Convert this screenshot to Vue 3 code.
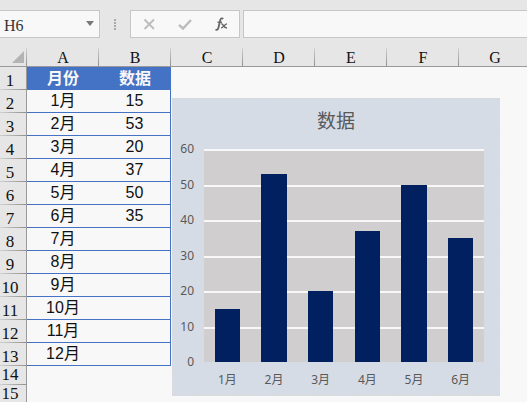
<script setup>
import { ref } from 'vue'

const cellName = ref('H6')
const formula = ref('')
const columns = ['A', 'B', 'C', 'D', 'E', 'F', 'G']
const values = [15, 53, 20, 37, 50, 35]
const months = Array.from({ length: 12 }, (_, i) => ({
  label: `${i + 1}月`,
  value: values[i] ?? ''
}))
const charted = months.slice(0, values.length)
const axisMax = 60
const ticks = [60, 50, 40, 30, 20, 10, 0]
</script>

<template>
  <div class="workbook">
    <header class="formula-bar">
      <div class="box name-box">
        <input v-model="cellName" class="name-input" aria-label="名称框" />
        <button class="name-drop" type="button" aria-label="展开">
          <svg width="8" height="5" viewBox="0 0 8 5"><path d="M0 0h8L4 5z" fill="#777" /></svg>
        </button>
      </div>
      <div class="grip"><i></i><i></i><i></i><i></i></div>
      <div class="box actions">
        <button type="button" aria-label="取消">
          <svg width="14" height="14" viewBox="0 0 14 14"><path d="M2.5 2.5l9.5 9.5M12 2.5L2.5 12" stroke="#bcbcbc" stroke-width="1.8" fill="none" /></svg>
        </button>
        <button type="button" aria-label="输入">
          <svg width="14" height="14" viewBox="0 0 14 14"><path d="M1 7.8l4 3.7L13 3" stroke="#bcbcbc" stroke-width="2.4" fill="none" /></svg>
        </button>
        <button type="button" aria-label="插入函数">
          <svg width="14" height="14" viewBox="0 0 14 14" fill="none" stroke="#666">
            <path d="M9 2.2C8.400 .8 6.800 1 6.300 3L4.300 11.200C3.900 12.700 2.600 13.300 1.600 12.300" stroke-width="1.8" />
            <path d="M3.500 5.200h4.500" stroke-width="1.400" />
            <path d="M7.300 7c2.200-.8 2.300 4.600 5.700 3.700" stroke-width="1.600" />
            <path d="M13 6.800c-2.200 0-3.600 4-6 4" stroke-width="1.200" />
          </svg>
        </button>
      </div>
      <input v-model="formula" class="box formula" aria-label="编辑栏" />
    </header>

    <main class="sheet">
      <table class="grid">
        <colgroup>
          <col class="col-index" />
          <col v-for="c in columns" :key="c" class="col" />
        </colgroup>
        <thead>
          <tr>
            <th class="corner">
              <svg width="12" height="12" viewBox="0 0 12 12"><path d="M12 0v12H0z" fill="#b4b4b4" /></svg>
            </th>
            <th v-for="c in columns" :key="c" class="col-head" scope="col">{{ c }}</th>
          </tr>
        </thead>
        <tbody>
          <tr class="title-row">
            <th class="index" scope="row">1</th>
            <td>月份</td>
            <td>数据</td>
            <td colspan="5" class="blank"></td>
          </tr>
          <tr v-for="(m, i) in months" :key="m.label" class="data-row">
            <th class="index" scope="row">{{ i + 2 }}</th>
            <td>{{ m.label }}</td>
            <td class="last">{{ m.value }}</td>
            <td colspan="5" class="blank"></td>
          </tr>
          <tr v-for="n in [14, 15]" :key="n" class="short-row">
            <th class="index" scope="row">{{ n }}</th>
            <td colspan="7" class="blank"></td>
          </tr>
        </tbody>
      </table>

      <figure class="chart">
        <figcaption>数据</figcaption>
        <div class="y-axis">
          <span v-for="t in ticks" :key="t">{{ t }}</span>
        </div>
        <div class="plot">
          <div class="lines"><i v-for="n in 6" :key="n"></i></div>
          <div class="bars">
            <div v-for="m in charted" :key="m.label" class="slot">
              <div class="bar" :style="{ height: (m.value / axisMax) * 100 + '%' }"></div>
            </div>
          </div>
        </div>
        <div class="x-axis">
          <span v-for="m in charted" :key="m.label">{{ m.label }}</span>
        </div>
      </figure>
    </main>
  </div>
</template>

<style>
body {
  background: #f8f8f8;
}
</style>

<style scoped>
.workbook {
  height: 100vh;
  display: flex;
  flex-direction: column;
  overflow: hidden;
  background: #f8f8f8;
  color: #111;
  font-family: "Liberation Sans", "Noto Sans CJK SC", sans-serif;
}
.workbook * {
  box-sizing: border-box;
}
.formula-bar {
  flex: none;
  display: flex;
  padding: 10px 0;
  background: #e6e6e6;
}
.box {
  height: 28px;
  border: 1px solid #c6c6c6;
  background: #f8f8f8;
}
button {
  display: flex;
  align-items: center;
  justify-content: center;
  padding: 0;
  border: 0;
  background: none;
}
.name-box {
  display: flex;
  width: 100px;
  border-left: 0;
}
.name-input {
  flex: 1;
  min-width: 0;
  padding: 4px 0 0 4px;
  border: 0;
  outline: 0;
  background: none;
  color: #333;
  font: 16px "Liberation Serif", serif;
}
.name-drop {
  width: 18px;
  padding: 0 0 2px 0;
}
.grip {
  width: 30px;
  display: flex;
  flex-direction: column;
  align-items: center;
  justify-content: center;
  gap: 1px;
}
.grip i {
  width: 2px;
  height: 2px;
  background: #aaa;
}
.actions {
  width: 110px;
  display: grid;
  grid-template-columns: repeat(3, 1fr);
}
.formula {
  flex: 1;
  min-width: 0;
  margin-left: 3px;
  border-right: 0;
  border-radius: 0;
  outline: 0;
}
.sheet {
  position: relative;
  flex: 1;
  overflow: hidden;
}
.grid {
  table-layout: fixed;
  width: 531px;
  border-collapse: separate;
  border-spacing: 0;
}
.col-index {
  width: 27px;
}
.col {
  width: 72px;
}
th,
td {
  padding: 0;
  text-align: center;
}
thead th {
  height: 19px;
  border-bottom: 1px solid #999;
  background: linear-gradient(#d0d0d0, #909090) right / 1px 100% no-repeat #e6e6e6;
}
.col-head {
  font: 16px/16px "Liberation Serif", serif;
  padding-top: 2px;
}
.corner svg {
  display: block;
  margin: 0 0 0 12px;
}
.index {
  height: 23px;
  padding: 0 6px 1px 0;
  border-right: 1px solid #999;
  background: linear-gradient(90deg, #d0d0d0, #909090) bottom / 100% 1px no-repeat #e6e6e6;
  font: 17px/16px "Liberation Serif", serif;
  vertical-align: bottom;
}
.title-row td {
  font-size: 16px;
  line-height: 22px;
  font-weight: 700;
}
.title-row td:not(.blank) {
  background: #4472c4;
  color: #f8f8f8;
}
.data-row td:not(.blank) {
  border-bottom: 1px solid #4472c4;
  font-size: 16px;
  line-height: 22px;
}
.data-row .last {
  border-right: 1px solid #4472c4;
}
.short-row .index {
  height: 19px;
  padding-bottom: 2px;
}
.chart {
  position: absolute;
  top: 50px;
  left: 172px;
  width: 328px;
  height: 298px;
  margin: 0;
  padding: 0 15px 0 0;
  display: grid;
  grid-template-columns: 31px 1fr;
  grid-template-rows: 50px 213px 1fr;
  border: 1px dashed #d9d9d9;
  background: #d6dce5;
  color: #595959;
  font: 12px/14px "Noto Sans", "Noto Sans CJK SC", sans-serif;
}
figcaption {
  grid-column: 1 / 3;
  padding: 10px 0 0 15px;
  text-align: center;
  font-size: 19px;
  line-height: 24px;
}
.y-axis {
  display: flex;
  flex-direction: column;
  justify-content: space-between;
  margin: -7px 0;
  padding-right: 10px;
  text-align: right;
  font-size: 12px;
}
.plot {
  display: grid;
  background: #d0cece;
}
.lines,
.bars {
  grid-area: 1 / 1;
  display: grid;
}
.lines {
  grid-template-rows: repeat(6, 1fr);
}
.lines i {
  border-top: 2px solid #f8f8f8;
}
.bars,
.x-axis {
  grid-template-columns: repeat(6, 1fr);
}
.slot {
  display: flex;
  align-items: flex-end;
  justify-content: center;
}
.bar {
  width: 54%;
  background: #002060;
}
.x-axis {
  grid-column: 2;
  display: grid;
  padding-top: 11px;
  text-align: center;
  font-size: 12px;
}
</style>
